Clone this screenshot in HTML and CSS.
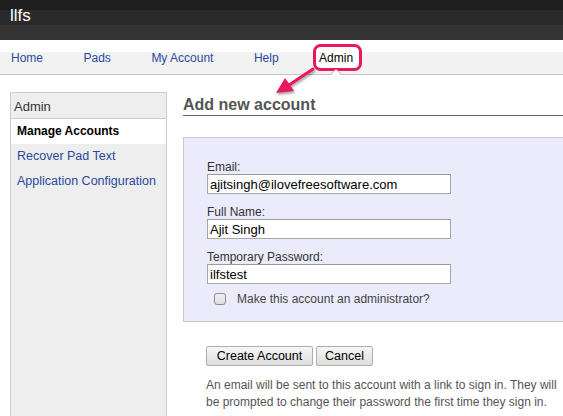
FILE: index.html
```html
<!DOCTYPE html>
<html lang="en">
<head>
<meta charset="utf-8">
<title>llfs – Admin</title>
<link rel="stylesheet" href="styles.css">
</head>
<body>
<header class="topbar">
  <span class="brand">llfs</span>
</header>

<nav class="tabs">
  <a class="tab" href="#">Home</a>
  <a class="tab" href="#">Pads</a>
  <a class="tab" href="#">My Account</a>
  <a class="tab" href="#">Help</a>
  <a class="tab active" href="#">Admin</a>
</nav>

<!-- callout: frame round the Admin tab with a pointer down to the page title -->
<svg class="callout" width="100" height="65" viewBox="0 0 100 65" aria-hidden="true">
  <g class="callout-ink">
    <line x1="43" y1="34" x2="19" y2="50" stroke="#e8175f" stroke-width="3" stroke-linecap="round"/>
    <polygon points="6,58 24,56 15,43" fill="#e8175f"/>
  </g>
  <rect x="44.5" y="10.5" width="46" height="24" rx="6" ry="6" fill="#fff" stroke="#e8175f" stroke-width="3"/>
</svg>

<div class="page">
  <aside class="sidebar">
    <div class="side-title">Admin</div>
    <a class="side-link current" href="#">Manage Accounts</a>
    <a class="side-link" href="#">Recover Pad Text</a>
    <a class="side-link" href="#">Application Configuration</a>
  </aside>

  <main class="content">
    <h2 class="page-title">Add new account</h2>

    <form class="formbox">
      <div class="field">
        <label for="email">Email:</label>
        <input class="text" id="email" type="text" value="ajitsingh@ilovefreesoftware.com">
      </div>
      <div class="field">
        <label for="fullname">Full Name:</label>
        <input class="text" id="fullname" type="text" value="Ajit Singh">
      </div>
      <div class="field field-last">
        <label for="temppass">Temporary Password:</label>
        <input class="text" id="temppass" type="text" value="ilfstest">
      </div>
      <div class="check-row">
        <input class="check" id="isadmin" type="checkbox">
        <label for="isadmin">Make this account an administrator?</label>
      </div>
    </form>

    <div class="actions">
      <button class="btn btn-create" type="button">Create Account</button>
      <button class="btn btn-cancel" type="button">Cancel</button>
    </div>

    <p class="note">An email will be sent to this account with a link to sign in. They will<br>be prompted to change their password the first time they sign in.</p>
  </main>
</div>
</body>
</html>
```

FILE: styles.css
```css
html, body {
  margin: 0;
  padding: 0;
  background: #fff;
}

body {
  position: relative;
  overflow: hidden;
  height: 416px;
  font-family: "Liberation Sans", Arial, sans-serif;
  color: #333;
}

/* dark title strip */
.topbar {
  height: 40px;
  background: linear-gradient(to bottom,
    #1f1f1f 0, #1f1f1f 10px,
    #2a2a2a 10px, #2a2a2a 25px,
    #333 25px, #333 40px);
}

.brand {
  display: block;
  padding: 6px 0 0 10px;
  font-size: 17px;
  line-height: 20px;
  color: #fff;
}

/* main tabs */
.tabs {
  display: flex;
  gap: 40.5px;
  margin-top: 12px;
  height: 22px;
  padding-left: 11px;
  background: #f2f2f2;
  border-bottom: 1px solid #c6c6c6;
}

.tab {
  position: relative;
  z-index: 2;
  font-size: 12px;
  line-height: 13px;
  color: #2a4a9c;
  text-decoration: none;
}

.tab.active {
  color: #000;
}

/* little notch in the tab rule under the active tab */
.tab.active::before,
.tab.active::after {
  content: "";
  position: absolute;
  left: 50%;
  width: 0;
  height: 0;
  border-style: solid;
  border-color: transparent;
}

.tab.active::before {
  top: 17px;
  margin-left: -6px;
  border-width: 0 6px 5px 6px;
  border-bottom-color: #c6c6c6;
}

.tab.active::after {
  top: 18px;
  margin-left: -5px;
  border-width: 0 5px 5px 5px;
  border-bottom-color: #fff;
}

.callout {
  position: absolute;
  left: 270px;
  top: 35px;
  z-index: 1;
  overflow: visible;
}

.callout-ink {
  filter: drop-shadow(1px 2px 1px rgba(0, 0, 0, 0.35));
}

/* sidebar + content */
.page {
  display: flex;
  align-items: flex-start;
  margin-top: 17px;
}

.sidebar {
  flex: none;
  width: 155px;
  height: 340px;
  margin-left: 10px;
  border: 1px solid #ccc;
  background: #eee;
}

.side-title {
  padding: 2px 3px 0;
  line-height: 23px;
  font-size: 13px;
  color: #333;
  border-bottom: 1px solid #ccc;
}

.side-link {
  display: block;
  padding-left: 6px;
  line-height: 25px;
  font-size: 12.5px;
  color: #2a4a9c;
  text-decoration: none;
  white-space: nowrap;
}

.side-link.current {
  background: #fff;
  font-size: 12px;
  font-weight: bold;
  color: #000;
}

.content {
  flex: 1;
  margin-left: 16px;
  min-width: 0;
}

.page-title {
  margin: 3px 0 0;
  font-size: 16px;
  line-height: 20px;
  font-weight: bold;
  color: #555;
  border-bottom: 1px solid #666;
}

.formbox {
  margin: 21px -10px 0 0;
  padding: 23px 0 15px 23px;
  border: 1px solid #c8c8c8;
  background: #ebebfb;
}

.field label {
  display: block;
  font-size: 12px;
  line-height: 13px;
  color: #333;
}

.text {
  display: block;
  box-sizing: border-box;
  width: 244px;
  height: 20px;
  margin: 0 0 12px;
  padding: 0 2px;
  border: 1px solid #a7a7a7;
  border-top-color: #9a9a9a;
  background: #fff;
  font-family: "Liberation Sans", Arial, sans-serif;
  font-size: 13px;
  color: #000;
  outline: none;
}

.field-last .text {
  margin-bottom: 8px;
}

.check-row {
  display: flex;
  align-items: center;
  height: 14px;
  font-size: 12px;
  color: #444;
}

.check {
  appearance: none;
  -webkit-appearance: none;
  flex: none;
  box-sizing: border-box;
  width: 12px;
  height: 12px;
  margin: 0 0 0 7px;
  border: 1px solid #8e8e8e;
  border-radius: 3px;
  background: linear-gradient(to bottom, #f2f2f2, #dcdcdc);
}

.check-row label {
  margin-left: 11px;
}

.actions {
  display: flex;
  gap: 3px;
  margin: 24px 0 0 23px;
}

.btn {
  box-sizing: border-box;
  height: 20px;
  padding: 0;
  border: 1px solid #adadad;
  border-radius: 2px;
  background: linear-gradient(to bottom, #f6f6f6, #dedede);
  font-family: "Liberation Sans", Arial, sans-serif;
  font-size: 12.5px;
  line-height: 18px;
  color: #000;
  text-align: center;
}

.btn-create {
  width: 107px;
}

.btn-cancel {
  width: 57px;
}

.note {
  margin: 11px 0 0 23px;
  font-size: 12px;
  line-height: 16.5px;
  color: #555;
  white-space: nowrap;
}
```
